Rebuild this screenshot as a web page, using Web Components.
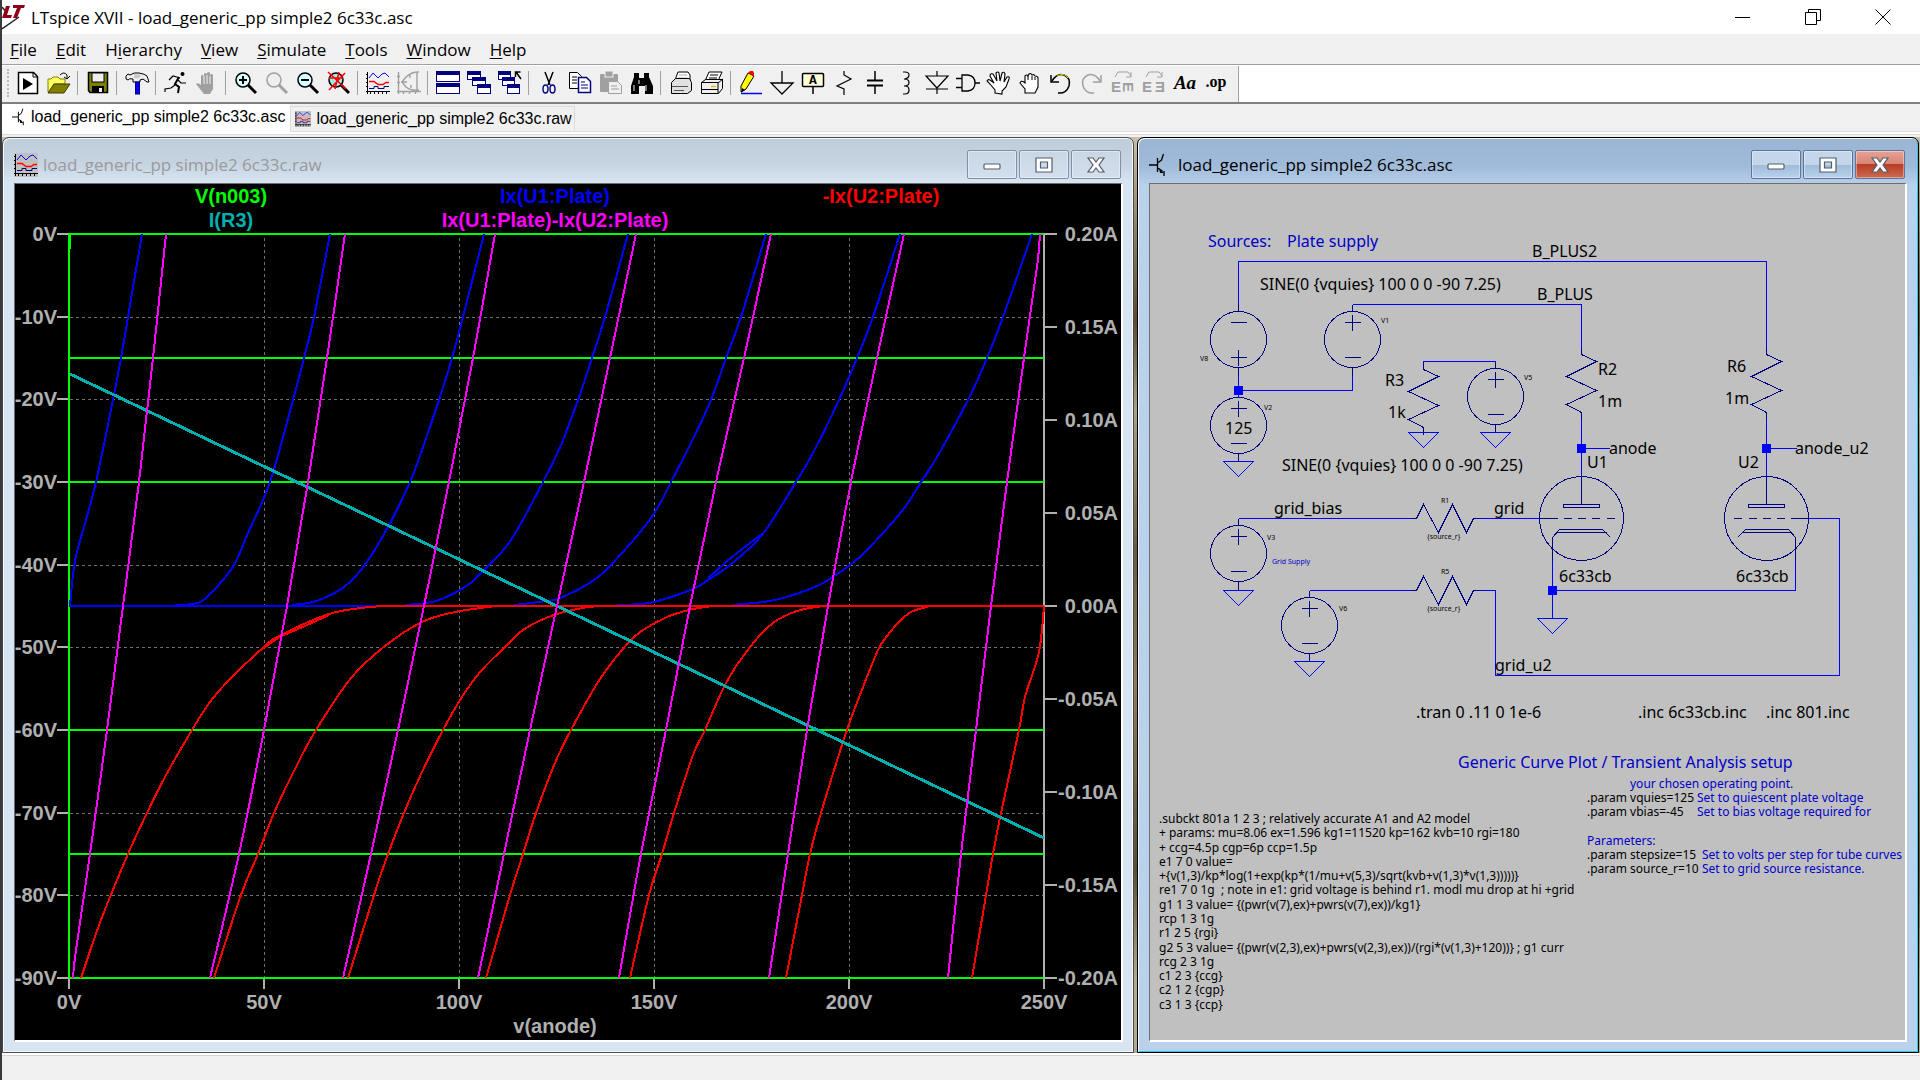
<!DOCTYPE html>
<html lang="en">
<head>
<meta charset="utf-8">
<title>LTspice XVII</title>
<style>
  html, body { margin: 0; height: 100%; }
  body {
    background: #3a3a3c;
    color: #000;
    font-family: 'Open Sans', 'Noto Sans', sans-serif;
    font-size: 17px;
  }
</style>
</head>
<body>
<lt-app></lt-app>

<script>
const define = (name, html, setup) => {
  const template = document.createElement('template');
  template.innerHTML = html;
  customElements.define(name, class extends HTMLElement {
    connectedCallback() {
      if (this.shadowRoot) return;
      this.attachShadow({ mode: 'open' });
      this.shadowRoot.appendChild(template.content.cloneNode(true));
      if (setup) setup(this, this.shadowRoot);
    }
  });
};

const waveIcon = (bg) => `
  <rect width="24" height="24" fill="${bg}"/>
  <path d="M1.5 1v22M0 20.500h24" stroke="#000" fill="none"/>
  <path d="M0 3.500h2M0 7.500h2M0 11.500h2M0 15.500h2M4.500 20v3M8.500 20v3M12.500 20v3M16.500 20v3M20.500 20v3" stroke="#000" fill="none"/>
  <path d="M3 7l4-5 5 5 4-4 3-1 4 4" stroke="#00f" fill="none"/>
  <path d="M3 10.500h5l4 3h5l3-2h3" stroke="#f00" stroke-width="1.500" fill="none"/>
  <path d="M3 17.500h5v-2h4v2h6v-2h5" stroke="#000080" fill="none"/>`;

const transistorIcon = `
  <path d="M0 12h8M8.500 5v14M8.500 10l4-3 2-6M8.500 15l5 3M15 18v5" stroke="#000" stroke-width="1.300" fill="none"/>
  <path d="M10 15l5 5h-4z"/>`;

// ---- toolbar glyphs, 24 x 24 each; null is a separator ----
const lens = (ink, glass) => `
  <circle cx="9" cy="9" r="7" fill="${glass}" stroke="${ink}" stroke-width="1.500"/>
  <path d="M14 14l8 8" stroke="${ink}" stroke-width="3" fill="none"/>`;
const pane = (x, y, w, h) => `
  <rect x="${x + .5}" y="${y + .5}" width="${w}" height="${h}" fill="#fff" stroke="#000080"/>
  <rect x="${x}" y="${y}" width="${w + 1}" height="4" fill="#000080"/>`;
const turnArrow = '<path d="M4 6l3-5h10l3 4M20 1v5h-5" fill="none" stroke="#a0a0a0"/>';
const letterE = 'fill="#a0a0a0" font-family="Liberation Sans, sans-serif" font-weight="700" font-size="15"';

const TOOLS = [
  ['Run', `<path d="M2.500 1.500h15l4 4v17h-19z" fill="#fff" stroke="#000" stroke-width="1.500"/><path d="M17 1v5h5" fill="none" stroke="#000"/><path d="M7 7v12l10-6z"/>`],
  ['Open', `<path d="M1 8h3l2-2h5l2 2h5v5H7l-5 8H1z" fill="#ffff60" stroke="#808000"/><path d="M1 22l6-9h16l-6 9z" fill="#808000" stroke="#404000"/><path d="M13 4q4-4 7 0v3M17 6l3 2 3-3" fill="none" stroke="#000"/>`],
  null,
  ['Save', `<path d="M2.500 1.500h19v20H4l-1.500-2z" fill="#808000" stroke="#000" stroke-width="1.500"/><rect x="6" y="2" width="12" height="9" fill="#efefef" stroke="#000"/><rect x="6" y="15" width="12" height="7"/><rect x="13" y="17" width="3" height="4" fill="#efefef"/>`],
  null,
  ['Control Panel', `<path d="M1 5l2-2 2 1q4-3 9-2 6 1 8 3l2 6h-2l-4-3-3 1v2H8V8Q4 7 3 9L1 8z" fill="#efefef" stroke="#000"/><path d="M9 3l7 1-2 3H9z" fill="#c8c8c8"/><rect x="10.500" y="11" width="4" height="12" fill="#00f" stroke="#000080"/>`],
  null,
  ['Run Simulation', `<circle cx="18.500" cy="3" r="2"/><path d="M15 6l-4 7 4 3-1 6" fill="none" stroke="#000" stroke-width="2"/><path d="M16 7L9 5 5 9M14 9l3 3h5M11 14l-4 3-6 1v3" fill="none" stroke="#000" stroke-width="1.200"/>`],
  ['Halt', `<path d="M9 23l-8-10q2-2 5 1V5q1-2 3 0V3q1-2 3 0V2q2-2 3 0v2q2-2 3 0v14l-3 5z" fill="#a0a0a0"/><path d="M9 5v8M12 4v9M15 5v8" stroke="#efefef" fill="none"/>`],
  null,
  ['Zoom In', lens('#000', '#d8ffff') + `<path d="M9 5v8M5 9h8" stroke="#000" stroke-width="2" fill="none"/>`],
  ['Pan', lens('#a0a0a0', '#efefef')],
  ['Zoom Out', lens('#000', '#d8ffff') + `<path d="M5 9h8" stroke="#000" stroke-width="2" fill="none"/>`],
  ['Zoom Full', lens('#000', '#a0e8e8') + `<path d="M1 1l18 17M18 2L2 19M2 7h14M12 1L8 18" stroke="#f00" stroke-width="1.500" fill="none"/>`],
  null,
  ['Autorange', waveIcon('none')],
  ['Plot Settings', `<path d="M1.500 1v22M0 20.500h24M0 5.500h3M0 11.500h3M6.500 20v3M12.500 20v3M18.500 20v3M22 1q-8 0-13 5l-4 5 4 5q5 4 13 3M20 2v17M4 11h6M13 3v4M14 14v3" fill="none" stroke="#a0a0a0" stroke-width="1.400"/>`],
  null,
  ['Tile', pane(0, 0, 23, 10) + pane(0, 12, 23, 10)],
  ['Cascade', pane(0, 0, 13, 8) + pane(5, 6, 13, 8) + pane(10, 13, 13, 9)],
  ['Close All', pane(0, 0, 12, 8) + pane(4, 6, 12, 8) + pane(9, 13, 12, 9) + `<path d="M23 8l-5-7M17.500 6V1h5" fill="none" stroke="#000" stroke-width="1.500"/>`],
  null,
  ['Cut', `<path d="M8 1l5 13M16 1l-5 13" fill="none" stroke="#000" stroke-width="1.500"/><ellipse cx="8.500" cy="18" rx="2.500" ry="4" fill="none" stroke="#000080" stroke-width="1.400"/><ellipse cx="15.500" cy="18" rx="2.500" ry="4" fill="none" stroke="#000080" stroke-width="1.400"/>`],
  ['Copy', `<path d="M1.500 1.500h8l4 4v12h-12z" fill="#fff" stroke="#000"/><path d="M4 6h5M4 9h5M4 12h5" stroke="#000" fill="none"/><path d="M10.500 6.500h8l4 4v11h-12z" fill="#fff" stroke="#000080" stroke-width="1.500"/><path d="M13 11h4M13 14h7M13 17h7" stroke="#000080" fill="none"/>`],
  ['Paste', `<rect x="1" y="3" width="18" height="18" rx="1" fill="#a0a0a0"/><rect x="6" y="0" width="8" height="6" fill="#a0a0a0" stroke="#efefef"/><path d="M9.500 10.500h9l4 4v8h-13z" fill="#efefef" stroke="#a0a0a0"/><path d="M12 15h6M12 18h8" stroke="#a0a0a0" fill="none"/>`],
  ['Find', `<path d="M4 2h5v5h5V2h5v4l4 9v8h-8v-8h-6v8H1v-8l3-9z"/><path d="M4 14v6M16 14v6M9 9v4" stroke="#efefef" fill="none"/>`],
  null,
  ['Print Setup', `<path d="M6 9l3-8h10l2 3v7" fill="#fff" stroke="#000"/><path d="M10 4h8M9 7h9" stroke="#aaa" fill="none"/><path d="M2.500 11.500l4-4h14l2 4v8l-4 3h-16z" fill="#e0e0e0" stroke="#000"/><path d="M3 15.500h16M5 19.500h10" stroke="#555" fill="none"/>`],
  ['Print', `<path d="M5 10l4-9h13l-4 9" fill="#fff" stroke="#000"/><path d="M10 4h8M9 7h8" stroke="#000" fill="none"/><path d="M1.500 11.500l4-3h17v9l-4 5h-17z" fill="#efefef" stroke="#000"/><path d="M1 11.500h17v11M18 12l5-4M1 18.500h17" stroke="#000" fill="none"/><path d="M11 15.500h5" stroke="#e0c000" stroke-width="1.500" fill="none"/>`],
  null,
  ['Wire', `<path d="M2 21V15L9 2l6 3-8 13z" fill="#ff0" stroke="#000"/><path d="M9 2l2-2h3l1 2v3z" fill="#f00"/><path d="M2 22l1-5 3 2z"/><path d="M2 22.500h21" stroke="#00f" stroke-width="1.500" fill="none"/>`],
  ['Ground', `<path d="M12 0v12M1 12h22L12 23z" fill="none" stroke="#000" stroke-width="1.300"/>`],
  ['Label Net', `<path d="M12 16v7" stroke="#000" stroke-width="1.500"/><rect x="1.500" y="2.500" width="21" height="13" rx="1" fill="#ffffd8" stroke="#000" stroke-width="1.500"/><text x="12" y="13" text-anchor="middle" font-family="Liberation Mono, monospace" font-weight="700" font-size="13">A</text>`],
  ['Resistor', `<path d="M12 0v4l7 4-14 7 7 3v6" fill="none" stroke="#000" stroke-width="1.200"/>`],
  ['Capacitor', `<path d="M12 0v9M12 15v8" stroke="#000" stroke-width="1.500" fill="none"/><path d="M4 9.500h16M4 14.500h16" stroke="#000" stroke-width="1.800" fill="none"/>`],
  ['Inductor', `<path d="M9 1h2q4 0 4 3t-4 4h-1q5 0 5 3.500T10 15h1q4 0 4 4t-4 4H9" fill="none" stroke="#000" stroke-width="1.200"/>`],
  ['Diode', `<path d="M12 0v5M1 5h22L12 17zM1 18h22M12 17v6" fill="none" stroke="#000" stroke-width="1.200"/>`],
  ['Component', `<path d="M6 4h6q7 1 7 8t-7 8H6zM0 7.500h6M0 16.500h6M19 12h5" fill="none" stroke="#000" stroke-width="1.300"/>`],
  ['Move', `<path d="M8 22v-3L3 13 0 10q1-2 3-1l4 3L3 5q0-3 3-2l4 7-1-8q2-2 3 0l1 8 2-8q2-2 3 1l-1 8 3-5q3-1 2 2l-3 8-4 4v3z" fill="#fff" stroke="#000" stroke-width="1.100"/>`],
  ['Drag', `<path d="M7 22v-4l-5-6q1-3 4-1l1 1V5q2-2 3 0l1-2q2-1 3 1 2-1 3 1 3 0 3 2v9l-3 6z" fill="#fff" stroke="#000" stroke-width="1.100"/><path d="M10 5v4M14 5v4M17 6v3" stroke="#000" fill="none"/>`],
  ['Undo', `<path d="M3 10Q8 2 15 4q7 3 5 11-3 8-11 7" fill="none" stroke="#000" stroke-width="1.500"/><path d="M8 5q7-4 11 2" fill="none" stroke="#cc0" stroke-width="1"/><path d="M2 4v7h8" fill="none" stroke="#000" stroke-width="1.500"/>`],
  ['Redo', `<path d="M20 10Q15 2 8 4 1 7 3 15q3 8 11 7" fill="none" stroke="#a0a0a0" stroke-width="1.500"/><path d="M21 4v7h-8" fill="none" stroke="#a0a0a0" stroke-width="1.500"/>`],
  ['Rotate', `${turnArrow}<g ${letterE}><text x="0" y="21">E</text><text transform="translate(12 11) rotate(90)">E</text></g>`],
  ['Mirror', `${turnArrow}<g ${letterE}><text x="0" y="21">E</text><text x="13" y="21">Ǝ</text></g>`],
  ['Text', `<text x="12" y="18" text-anchor="middle" font-family="Liberation Serif, serif" font-style="italic" font-weight="700" font-size="19">Aa</text>`],
  ['SPICE Directive', `<text x="12" y="16" text-anchor="middle" font-family="Liberation Serif, serif" font-weight="700" font-size="16">.op</text>`]
];

define('lt-titlebar', `
<style>
  :host { display: flex; align-items: center; height: 34px; padding-right: 2px; background: #fff; font-size: 17px; }
  .logo { width: 24px; height: 26px; margin-right: 5px; }
  .title { flex: 1; white-space: nowrap; }
  button { width: 70px; height: 34px; padding: 0; border: 0; background: none; }
  button svg { display: block; margin: auto; }
</style>
<svg class="logo" viewBox="0 0 24 26"><path d="M0 3l5 6M0 25l17-12" fill="none" stroke="#222" stroke-width="1.500"/><path d="M4 2h4L5 11h5l-1 3H0zM11 1h12l-1 3h-3l-4 10h-4l4-10h-4z" fill="#900018"/></svg>
<span class="title"><slot></slot></span>
<button aria-label="Minimize"><svg width="16" height="16" viewBox="0 0 16 16"><path d="M0 8.500h15" stroke="#000"/></svg></button>
<button aria-label="Restore"><svg width="16" height="16" viewBox="0 0 16 16"><path d="M.5 3.500h11v12H.5zM3.500 3V.5h12v11h-4" fill="none" stroke="#000"/></svg></button>
<button aria-label="Close"><svg width="16" height="16" viewBox="0 0 16 16"><path d="M.5.5l15 15M15.500.5l-15 15" stroke="#000"/></svg></button>
`);

define('lt-menubar', `
<style>
  :host { display: block; background: #f0f0f0; border-bottom: 1px solid #a0a0a0; }
  nav { display: flex; gap: 19px; height: 30px; padding-left: 8px; align-items: center; }
  button { padding: 0; border: 0; background: none; font: inherit; font-size: 17px; }
  u { text-decoration-thickness: 1px; text-underline-offset: 2px; }
</style>
<nav></nav>
`, (host, root) => {
  const items = ['File', 'Edit', 'H|ierarchy', 'View', 'Simulate', 'Tools', 'Window', 'Help'];
  root.querySelector('nav').innerHTML = items.map((item) => {
    const [head, tail] = item.includes('|') ? item.split('|') : ['', item];
    return `<button>${head}<u>${tail[0]}</u>${tail.slice(1)}</button>`;
  }).join('');
});

define('lt-toolbar', `
<style>
  :host { display: flex; height: 36px; background: #fff; border-bottom: 2px solid #808080; border-top: 1px solid #fff; }
  .band { display: flex; align-items: center; padding: 0 7px 2px 5px; background: #f0f0f0; border-right: 1px solid #a0a0a0; }
  .grip { width: 5px; height: 28px; border-left: 2px dotted #b8b8b8; box-sizing: border-box; }
  button { display: flex; justify-content: center; align-items: center; width: 31px; height: 32px; padding: 0; border: 0; background: none; }
  svg { overflow: visible; }
  i { width: 1px; height: 24px; margin: 0 4px 0 3px; background: #a0a0a0; }
</style>
<div class="band"><span class="grip"></span></div>
`, (host, root) => {
  root.querySelector('.band').insertAdjacentHTML('beforeend', TOOLS.map((tool) => tool
    ? `<button aria-label="${tool[0]}"><svg width="24" height="24" viewBox="0 0 24 24">${tool[1]}</svg></button>`
    : '<i></i>').join(''));
});

define('lt-tabs', `
<style>
  :host { display: flex; align-items: flex-start; height: 33px; background: linear-gradient(#f0f0f0 27px, #dcdcdc 27px, #dcdcdc 28px, #fff 28px, #fff 30px, #dcdcdc 30px, #dcdcdc 31px, #f0f0f0 31px); font: 16px 'Liberation Sans', sans-serif; }
  button { display: flex; align-items: center; height: 28px; padding: 0 5px 2px 8px; border: 0; background: #fff; font: inherit; gap: 5px; white-space: nowrap; box-sizing: border-box; }
  button + button { height: 26px; margin-top: 2px; padding: 0 2px 0 4px; background: #f0f0f0; border: 1px solid #dcdcdc; }
</style>
<button><svg width="16" height="18" viewBox="0 0 16 24">${transistorIcon}</svg>load_generic_pp simple2 6c33c.asc</button>
<button><svg width="16" height="16" viewBox="0 0 24 24">${waveIcon('#c0c0c0')}</svg>load_generic_pp simple2 6c33c.raw</button>
`);

define('mdi-window', `
<style>
  :host {
    display: flex; flex-direction: column; min-width: 0; min-height: 0; box-sizing: border-box;
    border: 1px solid #4a4a4a; border-radius: 7px 7px 0 0; padding: 0 10px 10px 11px;
    background: linear-gradient(#bfcddb, #c6d3e1 26px, #d7e4f2 44px);
    box-shadow: inset 1px 1px #f4f8fc, inset -1px -1px #f4f8fc;
    --caption: #9a9a9a; --btn: linear-gradient(#c9d6e4, #d3dfec); --close: var(--btn); --btn-line: #8090a8;
  }
  :host([active]) {
    border-color: #000; padding-right: 11px;
    background: linear-gradient(#9ab5d4, #a0bada 28px, #b9d1ea 48px);
    box-shadow: inset 1px 1px #f4f8fc, inset -1px -1px #30c8e0;
    --caption: #000; --btn: linear-gradient(#c3d6ea 50%, #a0bbd8 50%, #b8d2ec);
    --close: linear-gradient(#e5a396, #d88474 48%, #b83c26 50%, #cc6c50); --btn-line: #5f7696;
  }
  header { display: flex; align-items: center; height: 45px; flex: none; padding-top: 8px; box-sizing: border-box; }
  h2 { flex: 1; margin: 0; font-size: 17px; font-weight: 400; color: var(--caption); white-space: nowrap; }
  button { width: 50px; height: 29px; padding: 0; margin-left: 2px; border: 1px solid var(--btn-line); border-radius: 2px; background: var(--btn); box-shadow: inset 0 0 0 1px #ffffff60; }
  button:last-child { background: var(--close); margin-right: 2px; }
  button svg { display: block; margin: auto; }
  .client { display: flex; flex: 1; min-height: 0; border: solid; border-width: 1px 2px 2px 1px; border-color: #6e6e6e #fff #fff #6e6e6e; }
  ::slotted([slot=icon]) { margin-right: 5px; }
</style>
<header>
  <slot name="icon"></slot>
  <h2><slot name="title"></slot></h2>
  <button aria-label="Minimize"><svg width="18" height="18" viewBox="0 0 18 18"><rect x="1" y="8" width="16" height="5" rx="1" fill="#fff" stroke="#555c6c" stroke-width="1.200"/></svg></button>
  <button aria-label="Maximize"><svg width="18" height="18" viewBox="0 0 18 18"><path d="M1 2h16v14H1zM5.500 6h7v6h-7z" fill="#fff" fill-rule="evenodd" stroke="#555c6c" stroke-width="1.200"/></svg></button>
  <button aria-label="Close"><svg width="20" height="18" viewBox="0 0 20 18"><path d="M2 2h5l3 4 3-4h5l-5 7 5 7h-5l-3-4-3 4H2l5-7z" fill="#fff" stroke="#555c6c" stroke-width="1.200"/></svg></button>
</header>
<div class="client"><slot></slot></div>
`);

// ---- waveform viewer: 0..250 V across, 0..-90 V and 0.2..-0.2 A down ----
const BLUE = [
  '70,606 75,561 86,520 96,482 113,400 121,358 128,317 142,234',
  '170,606 181,605 192,604 202,601 216,588 234,565 248,533 270,482 293,400 304,358 314,317 330,234',
  '292,605 308,603 322,599 344,587 364,566 388,527 410,482 422,450 439,400 452,358 463,317 484,234',
  '405,605 436,601 468,585 485,569 511,540 543,482 561,445 578,400 592,358 605,317 628,234',
  '514,605 547,601 560,598 588,584 610,566 651,518 671,482 694,437 711,400 726,358 741,317 766,234',
  '606,606 640,604 658,601 693,589 708,580 730,565 762,535 796,482 813,453 839,400 857,358 873,317 900,234',
  '708,578 732,557 762,534',
  '732,605 775,600 819,585 850,565 867,550 902,511 921,482 937,457 968,400 987,358 1003,317 1032,234'
];
const RED = [
  '81,978 101,920 128,854 147,813 165,777 192,730 210,702 231,678 264,647 279,636 329,614 370,607 400,606',
  '264,648 280,637 305,626 329,615',
  '214,978 241,895 258,854 274,813 296,767 316,730 351,678 385,646 422,622 455,612 496,606',
  '348,978 374,895 388,854 404,813 422,772 443,730 462,697 481,671 505,647 523,630 551,616 582,608 601,606',
  '486,978 510,895 523,854 536,813 555,763 571,730 600,679 628,643 643,630 667,617 689,610 712,606',
  '630,978 649,895 662,854 674,813 693,755 705,730 726,683 750,647 773,623 797,611 823,606',
  '786,978 802,895 810,854 821,813 847,730 873,662 882,643 898,623 911,612 930,606',
  '972,978 986,895 993,854 1001,813 1019,730 1025,697 1039,652 1044,606'
];
const MAGENTA = [
  '73,978 76,950 90,854 107,730 123,606 139,482 153,358 166,234',
  '210,978 239,854 264,730 287,606 308,482 327,358 345,234',
  '343,978 371,854 398,730 424,606 449,482 473,358 495,234',
  '478,978 504,854 530,730 557,606 584,482 610,358 636,234',
  '619,978 641,854 666,730 690,606 716,482 744,358 771,234',
  '769,978 788,854 807,730 828,606 851,482 877,358 904,234',
  '948,978 961,854 976,730 991,606 1007,482 1024,358 1037,267 1040,234'
];

// Catmull-Rom through the samples
const smooth = (list) => {
  const p = list.split(' ').map((s) => s.split(',').map(Number));
  let d = `M${p[0]}`;
  for (let i = 0; i < p.length - 1; i++) {
    const a = p[i - 1] || p[i], b = p[i], c = p[i + 1], e = p[i + 2] || c;
    d += `C${b[0] + (c[0] - a[0]) / 6} ${b[1] + (c[1] - a[1]) / 6} ${c[0] - (e[0] - b[0]) / 6} ${c[1] - (e[1] - b[1]) / 6} ${c}`;
  }
  return d;
};

define('waveform-plot', `
<style>
  :host { display: block; flex: 1; min-width: 0; background: #000; }
  svg { display: block; width: 100%; height: 100%; }
  text { font: 700 20px 'Liberation Sans', sans-serif; fill: #b0b0b0; }
  .lines { fill: none; stroke-width: 2; shape-rendering: crispEdges; }
</style>
<svg viewBox="15 184 1106 856"></svg>
`, (host, root) => {
  const text = (x, y, s, anchor = 'middle', color = '') =>
    `<text x="${x}" y="${y}" text-anchor="${anchor}"${color && ` style="fill:${color}"`}>${s}</text>`;
  const lines = (list, color) => `<g stroke="${color}">${list.map((p) => `<path d="${smooth(p)}"/>`).join('')}</g>`;
  const xs = [69, 264, 459, 654, 849, 1044];
  const volts = Array.from({ length: 10 }, (_, i) => Math.round(234 + i * 744 / 9));
  const amps = Array.from({ length: 9 }, (_, i) => 234 + i * 93);
  root.querySelector('svg').innerHTML = `
    <g class="lines">
      <g stroke="#707070" style="stroke-width:1" stroke-dasharray="3 3">
        ${xs.slice(1, 5).map((x) => `<path d="M${x}.5 238V978"/>`).join('')}
        ${volts.slice(1, 9).map((y) => `<path d="M70 ${y}.5H1044"/>`).join('')}
      </g>
      <g stroke="#b0b0b0">
        ${volts.map((y) => `<path d="M57 ${y}H69"/>`).join('')}
        ${amps.map((y) => `<path d="M1044 ${y}H1057"/>`).join('')}
        ${xs.map((x) => `<path d="M${x} 978V989"/>`).join('')}
        <path d="M1044 234V978"/>
      </g>
      <path stroke="#00ff00" d="M69 978V234H1044M69 358H1044M69 482H1044M69 730H1044M69 854H1044M69 978H1044M70 234V249"/>
      ${lines(BLUE, '#0000ff')}
      <path stroke="#0000ff" d="M69 606H400"/>
      ${lines(RED, '#ff0000')}
      <path stroke="#ff0000" d="M385 606H1044"/>
      <path stroke="#00b0b0" style="stroke-width:3" d="M70 374L1044 838"/>
      ${lines(MAGENTA, '#ff00ff')}
    </g>
    ${text(231, 203, 'V(n003)', 'middle', '#00ff00')}
    ${text(555, 203, 'Ix(U1:Plate)', 'middle', '#0000ff')}
    ${text(881, 203, '-Ix(U2:Plate)', 'middle', '#ff0000')}
    ${text(231, 227, 'I(R3)', 'middle', '#00b0b0')}
    ${text(555, 227, 'Ix(U1:Plate)-Ix(U2:Plate)', 'middle', '#ff00ff')}
    ${volts.map((y, i) => text(57, y + 7, (i ? `-${i * 10}` : '0') + 'V', 'end')).join('')}
    ${amps.map((y, i) => text(1118, y + 7, (0.2 - i * 0.05).toFixed(2).replace('-0.00', '0.00') + 'A', 'end')).join('')}
    ${xs.map((x, i) => text(x, 1009, i * 50 + 'V')).join('')}
    ${text(555, 1033, 'v(anode)')}`;
});

// ---- schematic sheet ----
const source = (x, y, flip) => {
  const plus = flip ? y + 18 : y - 17;
  const minus = flip ? y - 17 : y + 18;
  return `<circle cx="${x}" cy="${y}" r="28"/><path d="M${x - 8} ${plus}h16M${x} ${plus - 8}v16M${x - 8} ${minus}h16"/>`;
};
const ground = (x, y) => `<path d="M${x - 15} ${y}h30l-15 15z"/>`;
const zigzag = (x, y) => `<path d="M${x} ${y - 7}v7l15 7-30 15 30 14-30 14 15 8v7"/>`;
const zigzagFlat = (x, y) => `<path d="M${x - 6} ${y}h6l7-14 15 28 14-28 14 28 7-14h7"/>`;
const tube = (x, y, dir) => `
  <circle cx="${x}" cy="${y}" r="42"/>
  <path d="M${x} ${y - 42}v28M${x - 18} ${y - 14}h36v3h-36zM${x - 42 * dir} ${y}h${18 * dir}M${x - 18 * dir} ${y}h${8 * dir}m${6 * dir} 0h${8 * dir}m${6 * dir} 0h${8 * dir}m${7 * dir} 0h${8 * dir}"/>
  <path d="M${x - 29 * dir} ${y + 42}v-23l${7 * dir}-8h${43 * dir}l${8 * dir} 8M${x - 25 * dir} ${y + 14}h${50 * dir}"/>`;

// [x, baseline, text, size, ink]
const SHEET_TEXT = [
  [1208, 247, 'Sources:', 'm', 'note'], [1287, 247, 'Plate supply', 'm', 'note'],
  [1260, 290, 'SINE(0 {vquies} 100 0 0 -90 7.25)', 'm'],
  [1282, 471, 'SINE(0 {vquies} 100 0 0 -90 7.25)', 'm'],
  [1532, 257, 'B_PLUS2', 'm'], [1537, 300, 'B_PLUS', 'm'],
  [1598, 375, 'R2', 'm'], [1598, 407, '1m', 'm'], [1727, 372, 'R6', 'm'], [1725, 404, '1m', 'm'],
  [1385, 386, 'R3', 'm'], [1388, 418, '1k', 'm'], [1225, 434, '125', 'm'],
  [1609, 454, 'anode', 'm'], [1795, 454, 'anode_u2', 'm'], [1587, 468, 'U1', 'm'], [1738, 468, 'U2', 'm'],
  [1274, 514, 'grid_bias', 'm'], [1494, 514, 'grid', 'm'], [1495, 671, 'grid_u2', 'm'],
  [1559, 582, '6c33cb', 'm'], [1736, 582, '6c33cb', 'm'],
  [1416, 718, '.tran 0 .11 0 1e-6', 'm'], [1638, 718, '.inc 6c33cb.inc', 'm'], [1766, 718, '.inc 801.inc', 'm'],
  [1200, 361, 'V8', 's'], [1381, 323, 'V1', 's'], [1264, 410, 'V2', 's'], [1524, 380, 'V5', 's'],
  [1267, 540, 'V3', 's'], [1339, 611, 'V6', 's'], [1441, 503, 'R1', 's'], [1441, 574, 'R5', 's'],
  [1427, 539, '{source_r}', 's'], [1427, 611, '{source_r}', 's'], [1272, 564, 'Grid Supply', 's', 'note'],
  [1458, 768, 'Generic Curve Plot / Transient Analysis setup', 'm', 'note'],
  [1630, 788, 'your chosen operating point.', 'n', 'note'],
  [1587, 802, '.param vquies=125', 'n'], [1697, 802, 'Set to quiescent plate voltage', 'n', 'note'],
  [1587, 816, '.param vbias=-45', 'n'], [1697, 816, 'Set to bias voltage required for', 'n', 'note'],
  [1587, 845, 'Parameters:', 'n', 'note'],
  [1587, 859, '.param stepsize=15', 'n'], [1702, 859, 'Set to volts per step for tube curves', 'n', 'note'],
  [1587, 873, '.param source_r=10', 'n'], [1702, 873, 'Set to grid source resistance.', 'n', 'note']
];
const NETLIST = [
  '.subckt 801a 1 2 3 ; relatively accurate A1 and A2 model',
  '+ params: mu=8.06 ex=1.596 kg1=11520 kp=162 kvb=10 rgi=180',
  '+ ccg=4.5p cgp=6p ccp=1.5p',
  'e1 7 0 value=',
  '+{v(1,3)/kp*log(1+exp(kp*(1/mu+v(5,3)/sqrt(kvb+v(1,3)*v(1,3)))))}',
  're1 7 0 1g  ; note in e1: grid voltage is behind r1. modl mu drop at hi +grid',
  'g1 1 3 value= {(pwr(v(7),ex)+pwrs(v(7),ex))/kg1}',
  'rcp 1 3 1g',
  'r1 2 5 {rgi}',
  'g2 5 3 value= {(pwr(v(2,3),ex)+pwrs(v(2,3),ex))/(rgi*(v(1,3)+120))} ; g1 curr',
  'rcg 2 3 1g',
  'c1 2 3 {ccg}',
  'c2 1 2 {cgp}',
  'c3 1 3 {ccp}'
];

define('schematic-sheet', `
<style>
  :host { display: block; flex: 1; min-width: 0; background: #c0c0c0; }
  svg { display: block; width: 100%; height: 100%; }
  text { font-family: 'Noto Sans', sans-serif; white-space: pre; fill: #000; }
  .m { font-size: 16px; }
  .n { font-size: 12px; }
  .s { font-size: 7px; }
  .note { fill: #0000c8; }
  .wires, .parts { fill: none; stroke: #0000ff; shape-rendering: crispEdges; }
  .parts { stroke: #000080; }
  .joints { fill: #0000ff; }
</style>
<svg viewBox="1150 184 755 856"></svg>
`, (host, root) => {
  const all = SHEET_TEXT.concat(NETLIST.map((line, i) => [1159, 823 + Math.round(i * 100 / 7), line, 'n']));
  root.querySelector('svg').innerHTML = `
    <g transform="translate(.5 .5)">
      <g class="parts">
        ${source(1238, 339, true)}${source(1352, 339)}${source(1238, 425)}${source(1495, 396)}
        ${source(1238, 553)}${source(1309, 625)}
        ${zigzag(1423, 369)}${zigzag(1581, 354)}${zigzag(1766, 354)}
        ${zigzagFlat(1416, 518)}${zigzagFlat(1416, 590)}
        ${tube(1581, 518, 1)}${tube(1766, 518, -1)}
        <path d="M1238 367v8M1352 367v8M1238 453v8M1352 311v-7M1238 311v-8M1495 368v-7M1495 424v8M1238 525v-7M1238 581v9M1309 597v-7M1309 653v8"/>
      </g>
      <g class="wires">
        ${ground(1238, 461)}${ground(1423, 432)}${ground(1495, 432)}${ground(1238, 590)}${ground(1309, 661)}${ground(1552, 618)}
        <path d="M1238 303V261H1766V347M1352 304H1581V347M1352 375V390H1238M1238 375V397M1423 362V361H1495"/>
        <path d="M1581 418V476M1581 448H1609M1766 418V476M1766 448H1796"/>
        <path d="M1238 518H1410M1480 518H1539M1309 590H1410M1480 590H1495V675H1839V518H1808"/>
        <path d="M1552 560V618M1552 590H1795V560"/>
      </g>
      <g class="joints">
        ${[[1238, 390], [1581, 448], [1766, 448], [1552, 590]].map(([x, y]) => `<rect x="${x - 4.500}" y="${y - 4.500}" width="9" height="9"/>`).join('')}
      </g>
    </g>
    ${all.map(([x, y, s, size, ink = '']) => `<text x="${x}" y="${y}" class="${size} ${ink}">${s}</text>`).join('')}`;
});

define('lt-app', `
<style>
  :host { display: flex; flex-direction: column; min-height: 100vh; padding-left: 2px; box-sizing: border-box; }
  main {
    display: grid; grid-template-columns: minmax(0, 1132fr) minmax(0, 782fr); gap: 3px; flex: 1; min-height: 0; padding-right: 1px;
    background: linear-gradient(#c8c0a8, #8c8068 10%, #5c4a34 20%, #a8a088 30%, #6a5a40 45%, #8c7c5c 60%, #5c4e34 80%, #b0a890 92%);
  }
  footer { height: 27px; background: linear-gradient(#fff 2px, #d8d4d8 2px, #d8d4d8 3px, #f0f0f0 3px); }
</style>
<lt-titlebar>LTspice XVII - load_generic_pp simple2 6c33c.asc</lt-titlebar>
<lt-menubar></lt-menubar>
<lt-toolbar></lt-toolbar>
<lt-tabs></lt-tabs>
<main>
  <mdi-window>
    <svg slot="icon" width="24" height="24" viewBox="0 0 24 24">${waveIcon('#c0c0c0')}</svg>
    <span slot="title">load_generic_pp simple2 6c33c.raw</span>
    <waveform-plot></waveform-plot>
  </mdi-window>
  <mdi-window active>
    <svg slot="icon" width="24" height="24" viewBox="0 0 24 24">${transistorIcon}</svg>
    <span slot="title">load_generic_pp simple2 6c33c.asc</span>
    <schematic-sheet></schematic-sheet>
  </mdi-window>
</main>
<footer></footer>
`);
</script>
</body>
</html>
